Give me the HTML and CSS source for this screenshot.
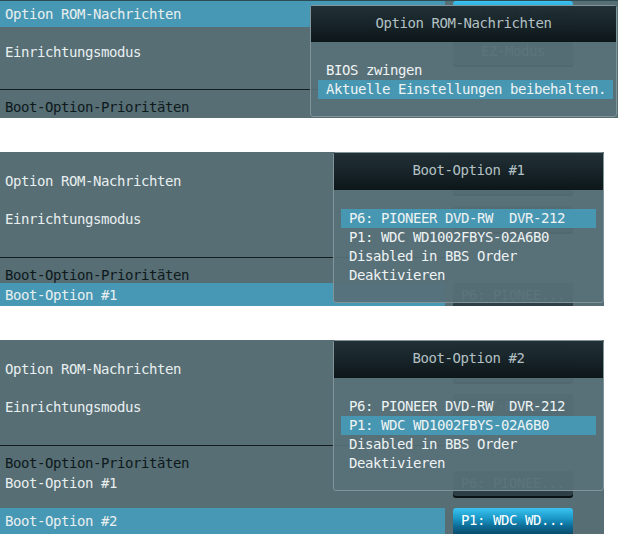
FILE: index.html
```html
<!DOCTYPE html>
<html lang="de">
<head>
<meta charset="utf-8">
<title>Boot-Optionen</title>
<link rel="stylesheet" href="styles.css">
</head>
<body>
<div class="page">

  <section class="panel panel-1">
    <div class="row row-a selected">
      <div class="label">Option ROM-Nachrichten</div>
      <div class="value value-on">Aktuelle E...</div>
    </div>
    <div class="row row-b">
      <div class="label">Einrichtungsmodus</div>
      <div class="value">EZ-Modus</div>
    </div>
    <div class="divider"></div>
    <div class="group-title">Boot-Option-Prioritäten</div>

    <div class="popup popup-1">
      <div class="popup-head">Option ROM-Nachrichten</div>
      <ul class="popup-list">
        <li>BIOS zwingen</li>
        <li class="on">Aktuelle Einstellungen beibehalten.</li>
      </ul>
    </div>
  </section>

  <section class="panel panel-2">
    <div class="row row-ghost">
      <div class="label"></div>
      <div class="value"></div>
    </div>
    <div class="row row-a">
      <div class="label">Option ROM-Nachrichten</div>
      <div class="value">Aktuelle E...</div>
    </div>
    <div class="row row-b">
      <div class="label">Einrichtungsmodus</div>
      <div class="value">EZ-Modus</div>
    </div>
    <div class="divider"></div>
    <div class="group-title">Boot-Option-Prioritäten</div>
    <div class="row row-c selected">
      <div class="label">Boot-Option #1</div>
      <div class="value">P6: PIONEE...</div>
    </div>

    <div class="popup popup-2">
      <div class="popup-head">Boot-Option #1</div>
      <ul class="popup-list">
        <li class="on">P6: PIONEER DVD-RW  DVR-212</li>
        <li>P1: WDC WD1002FBYS-02A6B0</li>
        <li>Disabled in BBS Order</li>
        <li>Deaktivieren</li>
      </ul>
    </div>
  </section>

  <section class="panel panel-3">
    <div class="row row-ghost">
      <div class="label"></div>
      <div class="value"></div>
    </div>
    <div class="row row-a">
      <div class="label">Option ROM-Nachrichten</div>
      <div class="value">Aktuelle E...</div>
    </div>
    <div class="row row-b">
      <div class="label">Einrichtungsmodus</div>
      <div class="value">EZ-Modus</div>
    </div>
    <div class="divider"></div>
    <div class="group-title">Boot-Option-Prioritäten</div>
    <div class="row row-c">
      <div class="label">Boot-Option #1</div>
      <div class="value">P6: PIONEE...</div>
    </div>
    <div class="row row-d selected">
      <div class="label">Boot-Option #2</div>
      <div class="value value-on">P1: WDC WD...</div>
    </div>

    <div class="popup popup-3">
      <div class="popup-head">Boot-Option #2</div>
      <ul class="popup-list">
        <li>P6: PIONEER DVD-RW  DVR-212</li>
        <li class="on">P1: WDC WD1002FBYS-02A6B0</li>
        <li>Disabled in BBS Order</li>
        <li>Deaktivieren</li>
      </ul>
    </div>
  </section>

</div>
</body>
</html>
```

FILE: styles.css
```css
* {
  box-sizing: border-box;
}

body {
  margin: 0;
  background: #ffffff;
  font-family: "DejaVu Sans Mono", "Liberation Mono", monospace;
  font-size: 14px;
  letter-spacing: -0.43px;
}

.page {
  display: flex;
  flex-direction: column;
  gap: 34px;
}

.panel {
  position: relative;
  overflow: hidden;
  width: 604px;
  background: #566e74;
}

.panel-1 {
  width: 618px;
  height: 118px;
  border-top: 1px solid #2f4b55;
}

.panel-2 {
  height: 154px;
}

.panel-3 {
  height: 194px;
}

.row {
  display: grid;
  grid-template-columns: 445px 120px;
  column-gap: 8px;
  height: 25px;
}

.row-ghost {
  margin-top: -21px;
}

.panel-2 .row-a,
.panel-3 .row-a {
  margin-top: 12px;
}

.row-b {
  margin-top: 13px;
}

.row-c {
  height: 24px;
}

.row-d {
  margin-top: 13px;
}

.label {
  padding-left: 5px;
  line-height: 26px;
  color: #e9eff0;
  white-space: nowrap;
}

.row-c .label {
  line-height: 25px;
}

.row.selected .label {
  background: #4798b4;
}

.value {
  border-radius: 3px;
  background: #2e4046;
  color: #8c9ea3;
  text-align: center;
  line-height: 25px;
  white-space: nowrap;
  box-shadow: 0 2px 0 #0a1214;
}

.value-on {
  background: linear-gradient(#3cc3f0 0%, #1a98c8 40%, #0e6c96 70%, #0a4d6e 100%);
  color: #ffffff;
  box-shadow: 0 1px 0 #06283a;
}

.divider {
  margin-top: 26px;
  width: 445px;
  height: 1px;
  background: #131d20;
}

.panel-1 .divider {
  margin-top: 25px;
}

.group-title {
  margin-top: 9px;
  height: 16px;
  padding-left: 5px;
  line-height: 17px;
  color: #0e191c;
  white-space: nowrap;
}

.popup {
  position: absolute;
  left: 333px;
  top: 0;
  width: 271px;
  border: 1px solid #80949a;
  border-radius: 3px;
  background: rgba(88, 112, 120, 0.92);
}

.popup-1 {
  left: 310px;
  top: 4px;
  width: 307px;
}

.popup-head {
  height: 37px;
  background: linear-gradient(rgba(30, 44, 50, 0.93), rgba(9, 18, 21, 0.95));
  color: #b3c0c3;
  text-align: center;
  line-height: 35px;
  white-space: nowrap;
}

.popup-1 .popup-head {
  height: 36px;
  line-height: 34px;
}

.popup-list {
  list-style: none;
  margin: 0;
  padding: 19px 7px 17px 7px;
}

.popup-1 .popup-list {
  padding-right: 3px;
}

.popup-list li {
  height: 19px;
  line-height: 19px;
  padding-left: 8px;
  color: #eef3f4;
  white-space: pre;
}

.popup-list li.on {
  background: #4897b2;
}
```
